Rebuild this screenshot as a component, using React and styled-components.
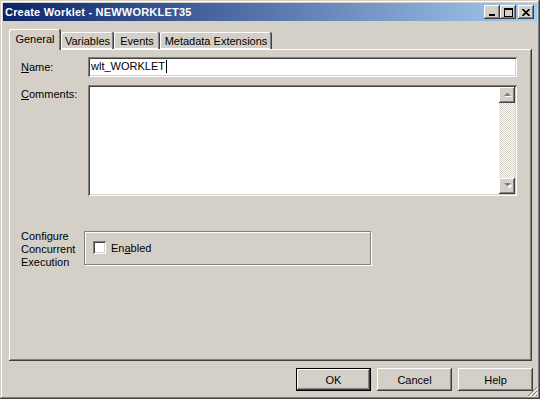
import React from 'react';
import styled, { createGlobalStyle } from 'styled-components';

const Global = createGlobalStyle`
  html, body { margin: 0; padding: 0; background: #d4d0c8; }
  body { font-family: "Liberation Sans", Arial, sans-serif; font-size: 11px; color: #000; }
`

const raised = `
  box-shadow: inset -1px -1px #404040, inset 1px 1px #fff, inset -2px -2px #808080, inset 2px 2px #d4d0c8;
`
const sunken = `
  box-shadow: inset 1px 1px #808080, inset -1px -1px #fff, inset 2px 2px #404040, inset -2px -2px #d4d0c8;
`

const Window = styled.div`
  position: relative;
  width: 540px;
  height: 399px;
  box-sizing: border-box;
  padding: 3px;
  background: #d4d0c8;
  box-shadow: inset -1px -1px #404040, inset 1px 1px #d4d0c8, inset -2px -2px #808080, inset 2px 2px #fff;
  display: flex;
  flex-direction: column;
`
const TitleBar = styled.div`
  height: 18px;
  display: flex;
  align-items: center;
  padding: 0 3px 0 2px;
  background: linear-gradient(to right, #0a246a, #a6caf0);
`
const Title = styled.div`
  flex: 1;
  color: #fff;
  font-weight: bold;
  font-size: 11px;
  letter-spacing: 0.2px;
`
const CaptionBtn = styled.div`
  width: 16px;
  height: 14px;
  box-sizing: border-box;
  background: #d4d0c8;
  ${raised}
  display: flex;
  align-items: center;
  justify-content: center;
  margin-left: ${p => p.$gap || 0}px;
`
const TabStrip = styled.div`
  display: flex;
  align-items: flex-end;
  height: 20px;
  margin: 8px 0 0 6px;
  position: relative;
  z-index: 1;
`
const Tab = styled.div`
  width: ${p => p.$w}px;
  height: ${p => (p.$active ? 21 : 17)}px;
  margin-bottom: ${p => (p.$active ? -1 : 0)}px;
  box-sizing: border-box;
  background: #d4d0c8;
  border-radius: 2px 2px 0 0;
  box-shadow: ${p => p.$active
    ? 'inset -1px 0 #404040, inset 1px 1px #fff, inset -2px 0 #808080'
    : 'inset -1px 0 #404040, inset 1px 1px #fff, inset -2px 0 #808080, inset 0 -1px #fff'};
  display: flex;
  align-items: ${p => (p.$active ? 'flex-start' : 'center')};
  justify-content: center;
  padding-top: ${p => (p.$active ? 4 : 0)}px;
`
const Panel = styled.div`
  width: 523px;
  height: 312px;
  box-sizing: border-box;
  margin-left: 6px;
  padding: 8px 15px 0 12px;
  ${raised}
  display: flex;
  flex-direction: column;
`
const Row = styled.div`
  display: flex;
  align-items: ${p => p.$align || 'center'};
  margin-top: ${p => p.$mt || 0}px;
`
const Label = styled.div`
  width: ${p => p.$w || 67}px;
  padding-top: ${p => p.$pt || 0}px;
  line-height: 13px;
`
const TextInput = styled.div`
  flex: 1;
  height: 20px;
  box-sizing: border-box;
  background: #fff;
  ${sunken}
  padding: 3px 0 0 3px;
  display: flex;
  align-items: flex-start;
`
const Caret = styled.span`
  display: inline-block;
  width: 1px;
  height: 13px;
  background: #000;
  margin-left: 1px;
`
const TextArea = styled.div`
  flex: 1;
  height: 111px;
  box-sizing: border-box;
  background: #fff;
  ${sunken}
  padding: 2px;
  display: flex;
  justify-content: flex-end;
`
const ScrollBar = styled.div`
  width: 16px;
  display: flex;
  flex-direction: column;
  background: repeating-conic-gradient(#fff 0 25%, #d4d0c8 0 50%) 0 0 / 2px 2px;
`
const ScrollBtn = styled.div`
  width: 16px;
  height: 16px;
  box-sizing: border-box;
  background: #d4d0c8;
  ${raised}
  display: flex;
  align-items: center;
  justify-content: center;
`
const Track = styled.div`
  flex: 1;
`
const GroupBox = styled.div`
  width: 287px;
  height: 34px;
  box-sizing: border-box;
  margin-top: 1px;
  border: 1px solid #808080;
  box-shadow: inset 1px 1px #fff, 1px 1px #fff;
  display: flex;
  align-items: center;
  padding: 0 0 1px 8px;
`
const Check = styled.div`
  width: 13px;
  height: 13px;
  box-sizing: border-box;
  background: #fff;
  ${sunken}
  margin-right: 5px;
`
const Footer = styled.div`
  display: flex;
  justify-content: flex-end;
  gap: 6px;
  margin: 7px 4px 0 0;
`
const Button = styled.div`
  width: 75px;
  height: 23px;
  box-sizing: border-box;
  background: #d4d0c8;
  display: flex;
  align-items: center;
  justify-content: center;
  box-shadow: ${p => p.$default
    ? 'inset 0 0 0 1px #000, inset -2px -2px #404040, inset 2px 2px #fff, inset -3px -3px #808080'
    : 'inset -1px -1px #404040, inset 1px 1px #fff, inset -2px -2px #808080, inset 2px 2px #d4d0c8'};
`
const Grip = styled.svg`
  position: absolute;
  right: 2px;
  bottom: 2px;
`

const Arrow = ({ down }) => (
  <svg width="9" height="6" viewBox="0 0 9 6">
    <polygon points={down ? '2,1 9,1 5.5,4.5' : '1,4 8,4 4.5,0.5'} fill="#fff" transform="translate(1,1)" />
    <polygon points={down ? '1,0 8,0 4.5,3.5' : '1,4 8,4 4.5,0.5'} fill="#808080" />
  </svg>
)

export default function App() {
  return (
    <>
      <Global />
      <Window>
        <TitleBar>
          <Title>Create Worklet - NEWWORKLET35</Title>
          <CaptionBtn>
            <svg width="8" height="8"><rect x="1" y="6" width="6" height="2" fill="#000" /></svg>
          </CaptionBtn>
          <CaptionBtn>
            <svg width="9" height="9"><rect x="0.5" y="0.5" width="8" height="8" fill="none" stroke="#000" /><rect x="0" y="0" width="9" height="2" fill="#000" /></svg>
          </CaptionBtn>
          <CaptionBtn $gap={2}>
            <svg width="8" height="7"><path d="M0.5 0 L7.5 7 M7.5 0 L0.5 7" stroke="#000" strokeWidth="1.6" /></svg>
          </CaptionBtn>
        </TitleBar>
        <TabStrip>
          <Tab $active $w={52}>General</Tab>
          <Tab $w={53}>Variables</Tab>
          <Tab $w={46}>Events</Tab>
          <Tab $w={112}>Metadata Extensions</Tab>
        </TabStrip>
        <Panel>
          <Row>
            <Label><u>N</u>ame:</Label>
            <TextInput>wlt_WORKLET<Caret /></TextInput>
          </Row>
          <Row $align="flex-start" $mt={8}>
            <Label $pt={3}><u>C</u>omments:</Label>
            <TextArea>
              <ScrollBar>
                <ScrollBtn><Arrow /></ScrollBtn>
                <Track />
                <ScrollBtn><Arrow down /></ScrollBtn>
              </ScrollBar>
            </TextArea>
          </Row>
          <Row $align="flex-start" $mt={34}>
            <Label $w={63}>Configure<br />Concurrent<br />Execution</Label>
            <GroupBox>
              <Check />
              <span>En<u>a</u>bled</span>
            </GroupBox>
          </Row>
        </Panel>
        <Footer>
          <Button $default>OK</Button>
          <Button>Cancel</Button>
          <Button>Help</Button>
        </Footer>
        <Grip width="11" height="11" viewBox="0 0 11 11">
          <path d="M10 1 L1 10 M10 5 L5 10 M10 9 L9 10" stroke="#808080" strokeWidth="1" />
          <path d="M11 2 L2 11 M11 6 L6 11" stroke="#fff" strokeWidth="1" />
        </Grip>
      </Window>
    </>
  );
}
